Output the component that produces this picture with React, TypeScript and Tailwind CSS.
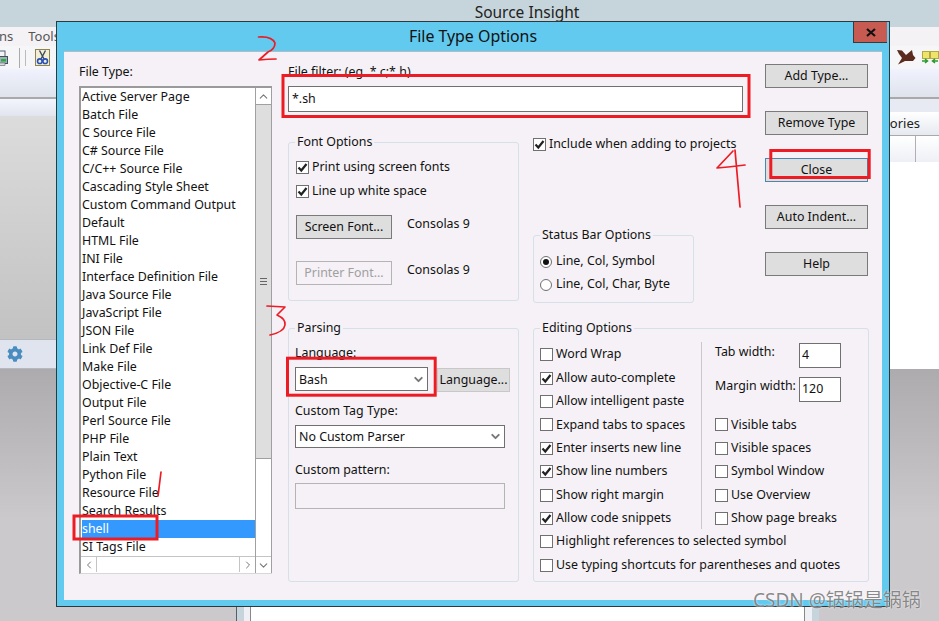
import { FaCog } from "react-icons/fa";
import { ChevronUp, ChevronDown, ChevronLeft, ChevronRight } from "lucide-react";

const FILE_TYPES = [
  "Active Server Page",
  "Batch File",
  "C Source File",
  "C# Source File",
  "C/C++ Source File",
  "Cascading Style Sheet",
  "Custom Command Output",
  "Default",
  "HTML File",
  "INI File",
  "Interface Definition File",
  "Java Source File",
  "JavaScript File",
  "JSON File",
  "Link Def File",
  "Make File",
  "Objective-C File",
  "Output File",
  "Perl Source File",
  "PHP File",
  "Plain Text",
  "Python File",
  "Resource File",
  "Search Results",
  "shell",
  "SI Tags File",
];

const EDIT_LEFT: [string, boolean][] = [
  ["Word Wrap", false],
  ["Allow auto-complete", true],
  ["Allow intelligent paste", false],
  ["Expand tabs to spaces", false],
  ["Enter inserts new line", true],
  ["Show line numbers", true],
  ["Show right margin", false],
  ["Allow code snippets", true],
];

const EDIT_RIGHT = ["Visible tabs", "Visible spaces", "Symbol Window", "Use Overview", "Show page breaks"];

function Check({ label, checked }: { label: string; checked?: boolean }) {
  return (
    <div className="flex h-[13px] items-center gap-[3px] whitespace-nowrap">
      <span className="flex h-[13px] w-[13px] shrink-0 items-center justify-center border border-[#707070] bg-white">
        {checked && (
          <svg width="11" height="11" viewBox="0 0 11 11">
            <path d="M1.5 5.5 L4.3 8.5 L9.5 2" fill="none" stroke="#222" strokeWidth="2.2" />
          </svg>
        )}
      </span>
      <span>{label}</span>
    </div>
  );
}

function Radio({ label, checked }: { label: string; checked?: boolean }) {
  return (
    <div className="flex h-[23px] items-center gap-[4px] whitespace-nowrap">
      <span className="flex h-[12px] w-[12px] shrink-0 items-center justify-center rounded-full border border-[#707070] bg-white">
        {checked && <span className="h-[6px] w-[6px] rounded-full bg-[#111]" />}
      </span>
      <span>{label}</span>
    </div>
  );
}

function Group({ title, className, children }: { title: string; className: string; children: React.ReactNode }) {
  return (
    <div className={`relative shrink-0 rounded-[3px] border border-[#d6e0e8] ${className}`}>
      <span className="absolute -top-[10px] left-[6px] bg-[#f5f1f6] px-[2px] leading-[18px]">{title}</span>
      {children}
    </div>
  );
}

function Button({ label, className = "" }: { label: string; className?: string }) {
  return (
    <div className={`flex h-[24px] items-center justify-center border border-[#7a7a7a] bg-[#dedede] ${className}`}>
      {label}
    </div>
  );
}

function Dropdown({ value, className }: { value: string; className: string }) {
  return (
    <div className={`flex items-center justify-between border border-[#707070] bg-white pl-[3px] pr-[2px] ${className}`}>
      <span className="pt-[2px]">{value}</span>
      <ChevronDown size={13} strokeWidth={3.5} className="text-[#777]" />
    </div>
  );
}

function ScrollCell({ className, children }: { className: string; children: React.ReactNode }) {
  return <div className={`flex items-center justify-center bg-white text-[#777] ${className}`}>{children}</div>;
}

function FileList() {
  return (
    <div className="flex h-[488px] w-[193px] border-b border-l-2 border-t-2 border-b-[#d8d8d8] border-l-[#9a9a9a] border-t-[#9a9a9a] bg-white">
      <div className="flex w-[174px] shrink-0 flex-col justify-between">
        <ul className="pl-px">
          {FILE_TYPES.map((name) => (
            <li
              key={name}
              className={`h-[18px] whitespace-nowrap leading-[17px] ${name === "shell" ? "bg-[#3399ff] text-white" : ""}`}
            >
              {name}
            </li>
          ))}
        </ul>
        <div className="mb-[1px] flex h-[16px] items-center justify-between border-t border-[#c4c4c4]">
          <ScrollCell className="h-full w-[16px] border-r border-[#c4c4c4]">
            <ChevronLeft size={12} />
          </ScrollCell>
          <ScrollCell className="h-full w-[16px] border-l border-[#c4c4c4]">
            <ChevronRight size={12} />
          </ScrollCell>
        </div>
      </div>
      <div className="flex w-[17px] shrink-0 flex-col border-x border-[#a0a0a0]">
        <ScrollCell className="h-[17px] border-b border-[#a0a0a0]">
          <ChevronUp size={13} />
        </ScrollCell>
        <div className="flex h-[354px] flex-col items-center justify-center gap-[2px] border-b border-[#a0a0a0] bg-[#dedede]">
          <span className="h-px w-[7px] bg-[#666]" />
          <span className="h-px w-[7px] bg-[#666]" />
          <span className="h-px w-[7px] bg-[#666]" />
        </div>
        <div className="flex-1" />
        <ScrollCell className="h-[17px] border-t border-[#c4c4c4]">
          <ChevronDown size={13} />
        </ScrollCell>
      </div>
    </div>
  );
}

function EditingOptions() {
  return (
    <Group title="Editing Options" className="h-[254px] w-[336px] pl-[6px] pt-[14px]">
      <div className="flex h-[187px]">
        <div className="w-[161px]">
          {EDIT_LEFT.map(([label, on]) => (
            <div key={label} className="flex h-[23.4px] items-center">
              <Check label={label} checked={on} />
            </div>
          ))}
        </div>
        <div className="-mt-px mb-px w-px bg-[#c8c8cc]" />
        <div className="ml-[13px]">
          <div className="h-[70.2px]">
            <div className="flex h-[34px] items-start">
              <span className="w-[84px] leading-[18px]">Tab width:</span>
              <span className="flex h-[25px] w-[42px] items-center border border-[#707070] bg-white pl-[2px]">4</span>
            </div>
            <div className="flex items-start">
              <span className="w-[84px] whitespace-nowrap leading-[18px]">Margin width:</span>
              <span className="flex h-[25px] w-[42px] items-center border border-[#707070] bg-white pl-[2px]">120</span>
            </div>
          </div>
          {EDIT_RIGHT.map((label) => (
            <div key={label} className="flex h-[23.4px] items-center">
              <Check label={label} />
            </div>
          ))}
        </div>
      </div>
      <div className="flex h-[23.4px] items-center">
        <Check label="Highlight references to selected symbol" />
      </div>
      <div className="flex h-[23.4px] items-center">
        <Check label="Use typing shortcuts for parentheses and quotes" />
      </div>
    </Group>
  );
}

function FileTypeDialog() {
  return (
    <div className="absolute left-[56px] top-[21px] flex h-[586px] w-[834px] flex-col border border-[#2c3a40] bg-[#62c9ef] px-[7px] pb-[6px] text-[12.4px] text-[#111]">
      <div className="relative flex h-[29px] shrink-0 items-center justify-center text-[15.9px]">
        <span>File Type Options</span>
        <div className="absolute -right-[5px] top-0 flex h-[21px] w-[34px] items-center justify-center border-b border-l border-[#3a3a3a] bg-[#c75b52]">
          <svg width="10" height="9" viewBox="0 0 10 9">
            <path d="M1 1 L9 8 M9 1 L1 8" stroke="#111" strokeWidth="2.2" />
          </svg>
        </div>
      </div>

      <div className="flex flex-1 border-t border-[#b4bcc2] bg-[#f5f1f6] pl-[15px] pt-[11px]">
        <div className="w-[193px] shrink-0">
          <div className="h-[23px] leading-[17px]">File Type:</div>
          <FileList />
        </div>

        <div className="ml-[16px] w-[581px]">
          <div className="flex h-[265px]">
            <div className="w-[455px] shrink-0">
              <div className="h-[23px] leading-[17px]">File filter: (eg. *.c;*.h)</div>
              <div className="flex h-[26px] items-center border border-[#707070] bg-white pl-[3px]">*.sh</div>
              <div className="mt-[26px] flex gap-[14px]">
                <Group title="Font Options" className="mt-[4px] h-[159px] w-[231px] pl-[7px] pt-[12px]">
                  <div className="flex h-[24px] items-center">
                    <Check label="Print using screen fonts" checked />
                  </div>
                  <div className="flex h-[24px] items-center">
                    <Check label="Line up white space" checked />
                  </div>
                  <div className="mt-[12px] flex items-start gap-[15px]">
                    <Button label="Screen Font..." className="w-[96px]" />
                    <span className="leading-[18px]">Consolas 9</span>
                  </div>
                  <div className="mt-[22px] flex items-start gap-[15px]">
                    <Button label="Printer Font..." className="w-[96px] !border-[#b4b4b4] !bg-[#f5f1f6] text-[#a0a0a0]" />
                    <span className="leading-[18px]">Consolas 9</span>
                  </div>
                </Group>
                <div>
                  <Check label="Include when adding to projects" checked />
                  <Group title="Status Bar Options" className="mt-[84px] h-[68px] w-[161px] pl-[6px] pt-[14px]">
                    <Radio label="Line, Col, Symbol" checked />
                    <Radio label="Line, Col, Char, Byte" />
                  </Group>
                </div>
              </div>
            </div>
            <div className="ml-[22px] flex w-[103px] shrink-0 flex-col gap-[23px] pt-px">
              <Button label="Add Type..." />
              <Button label="Remove Type" />
              <Button label="Close" className="!border-[#4a86b0]" />
              <Button label="Auto Indent..." />
              <Button label="Help" />
            </div>
          </div>

          <div className="flex gap-[14px]">
            <Group title="Parsing" className="h-[254px] w-[231px] pl-[6px] pt-[14px]">
              <div className="h-[18px] leading-[19px]">Language:</div>
              <div className="mt-[6px] flex h-[25px]">
                <Dropdown value="Bash" className="h-[24px] w-[133px]" />
                <div className="ml-[9px] mt-px flex h-[24px] w-[73px] items-center justify-center border border-[#c8c8c8] bg-[#dedede]">
                  Language...
                </div>
              </div>
              <div className="mt-[9px] h-[18px] leading-[19px]">Custom Tag Type:</div>
              <Dropdown value="No Custom Parser" className="mt-[6px] h-[23px] w-[210px]" />
              <div className="mt-[12px] h-[18px] leading-[19px]">Custom pattern:</div>
              <div className="mt-[5px] h-[26px] w-[210px] border border-[#b4b4b4]" />
            </Group>
            <EditingOptions />
          </div>
        </div>
      </div>
    </div>
  );
}

// red marker notes drawn on top of the dialog
function MarkerNotes() {
  return (
    <svg className="pointer-events-none absolute left-0 top-0" width="939" height="621" fill="none" stroke="#ed1c24">
      <g strokeWidth="3">
        <rect x="74" y="516" width="83" height="23" />
        <rect x="283" y="75.5" width="466" height="41" />
        <rect x="287.5" y="358.2" width="147.7" height="37" />
        <rect x="770.8" y="150.5" width="98.4" height="27" />
      </g>
      <g strokeWidth="1.7" strokeLinecap="round" strokeLinejoin="round">
        <path d="M161 472 L158 496" />
        <path d="M258.5 37 Q272 36 275 43 Q275 49 268 52 L259 60 Q268 59 276 59" />
        <path d="M267 306 L285 307 L277 315 Q286 319 285 325 Q284 332 270 335" />
        <path d="M733 151 L717 168 Q730 167 745 165 M735 150 L740 207" />
      </g>
    </svg>
  );
}

function PrinterIcon() {
  return (
    <svg width="16" height="16" viewBox="0 0 16 16" className="-ml-[8px]">
      <rect x="3" y="1" width="10" height="6" fill="#f4f4f8" stroke="#50606c" />
      <rect x="0.5" y="6.5" width="15" height="7" fill="#a4acb6" stroke="#40505c" />
      <rect x="9" y="9" width="5" height="2.5" fill="#22b040" />
      <rect x="3" y="13" width="10" height="2.5" fill="#d8dce2" stroke="#50606c" strokeWidth="0.6" />
    </svg>
  );
}

function ScissorsIcon() {
  return (
    <svg width="15" height="17" viewBox="0 0 15 17">
      <rect x="0.5" y="0.5" width="14" height="16" fill="#f2efd6" stroke="#8f8450" />
      <path d="M4.5 1.5 L9 10 M10.5 1.5 L6 10" stroke="#40485a" strokeWidth="1.4" fill="none" />
      <circle cx="4.8" cy="12.2" r="2.3" fill="none" stroke="#2850b8" strokeWidth="1.6" />
      <circle cx="10.2" cy="12.2" r="2.3" fill="none" stroke="#2850b8" strokeWidth="1.6" />
    </svg>
  );
}

function BirdIcon() {
  return (
    <svg width="19" height="15" viewBox="0 0 19 15">
      <path d="M0 0 L5 0.5 L9 5 L15 0 L16 5 L18.5 8 L16 11 L8 11 L1 14.5 L5 8 L2 4 Z" fill="#5a2a1e" />
    </svg>
  );
}

function SyncIcon() {
  return (
    <svg width="17" height="13" viewBox="0 0 17 13">
      <rect x="0.5" y="0.5" width="7" height="7" fill="#eee46a" stroke="#b4a840" />
      <rect x="8.5" y="0.5" width="8" height="7" fill="#eee46a" stroke="#b4a840" />
      <path d="M0 10 H5 M3 8 L5.5 10 L3 12 M16 10 H11 M13 8 L10.5 10 L13 12" stroke="#2a9a30" strokeWidth="1.5" fill="none" />
    </svg>
  );
}

function Backdrop() {
  return (
    <div className="flex h-[621px] w-[939px] flex-col overflow-hidden bg-[#cbc9cb] text-[13px] text-[#333]">
      <div className="flex h-[25px] shrink-0 items-center justify-center bg-[#c5d5db] pl-[115px] text-[15.5px] text-[#222]">
        Source Insight
      </div>
      <div className="h-[2px] shrink-0 bg-[#c5d5db]" />
      <div className="flex h-[19px] shrink-0 items-center bg-[#f5f2f6] text-[#555]">
        <span className="-ml-[1px]">ns</span>
        <span className="ml-[15px]">Tools</span>
      </div>
      <div className="flex h-[23px] shrink-0 items-center justify-between bg-[#f6f6f8]">
        <div className="flex items-center">
          <PrinterIcon />
          <span className="ml-[11px] h-[20px] w-px bg-[#aaa]" />
          <span className="ml-[5px] h-[16px] w-px bg-[#bbb]" />
          <span className="ml-[9px]">
            <ScissorsIcon />
          </span>
        </div>
        <div className="flex items-center gap-[6px]">
          <BirdIcon />
          <SyncIcon />
        </div>
      </div>
      <div className="h-[28px] shrink-0 bg-gradient-to-b from-[#f0f3fd] to-[#dfe3ec]" />
      <div className="h-[2px] shrink-0 bg-[#a9a9ab]" />

      <div className="flex flex-1">
        <div className="flex w-[236px] flex-col">
          <div className="h-[17px] bg-gradient-to-b from-[#f3f5fe] to-[#e2e5ee]" />
          <div className="h-[223px] bg-gradient-to-b from-[#dcdcdc] to-[#c2c2c2]" />
          <div className="flex h-[30px] items-center border-y border-[#b4b8c0] bg-[#dfe4ee] pl-[7px]">
            <FaCog size={16} className="text-[#4a8cc0]" />
          </div>
          <div className="flex-1 bg-gradient-to-b from-[#adabad] to-[#cbc9cb] to-60%" />
        </div>
        <div className="flex w-[583px] bg-white">
          <div className="w-px bg-[#556066]" />
          <div className="w-[7px] bg-[#c5d5db]" />
          <div className="w-[6px] bg-[#eef0f6]" />
          <div className="w-px bg-[#888]" />
          <div className="flex-1" />
          <div className="w-px bg-[#888]" />
          <div className="w-[7px] bg-[#eef0f6]" />
          <div className="w-[7px] bg-[#c5d5db]" />
        </div>
        <div className="flex w-[120px] flex-col">
          <div className="flex h-[13px] items-center bg-[#e7eaf2]" />
          <div className="flex h-[24px] items-center justify-end border-b border-[#a9a9ab] bg-gradient-to-b from-white to-[#e6e9f0] pr-[19px] text-[#222]">
            ories
          </div>
          <div className="flex h-[26px] justify-end bg-gradient-to-b from-white to-[#eef0f6]">
            <div className="w-[24px] border-l border-[#b0b0b4]" />
          </div>
          <div className="h-[207px] bg-white" />
          <div className="flex-1 bg-gradient-to-b from-[#adabad] to-[#cbc9cb] to-60%" />
        </div>
      </div>
    </div>
  );
}

export default function App() {
  return (
    <div
      className="relative h-[621px] w-[939px] overflow-hidden"
      style={{ fontFamily: '"Noto Sans", "Noto Sans CJK SC", sans-serif' }}
    >
      <Backdrop />
      <FileTypeDialog />
      <MarkerNotes />
      <span className="pointer-events-none absolute left-[753px] top-[588px] whitespace-nowrap text-[19px] leading-[24px] text-[#757575]/85 [text-shadow:0_0_2px_#ffffff]">
        CSDN @锅锅是锅锅
      </span>
    </div>
  );
}
